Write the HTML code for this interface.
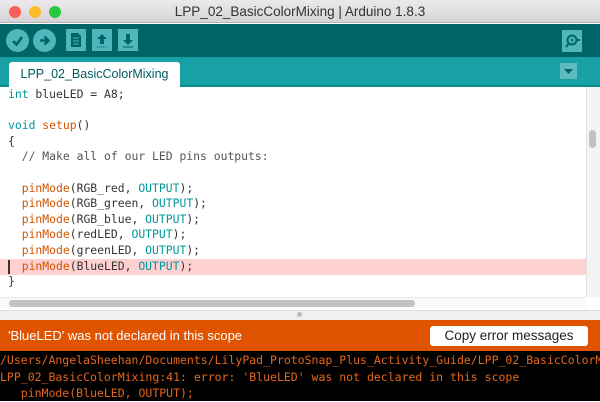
<!DOCTYPE html>
<html><head><style>
*{margin:0;padding:0;box-sizing:border-box}
body{width:600px;height:401px;overflow:hidden;background:#fff;font-family:"Liberation Sans",sans-serif;position:relative}
.a{position:absolute}
.mono{font-family:"DejaVu Sans Mono","Liberation Mono",monospace}
.code div{height:15.6px;line-height:15.6px;white-space:pre;font-size:11.4px;color:#333}
.k{color:#00979c}.f{color:#d35400}
.btn{width:23px;height:23px;border-radius:50%;background:#4db7bb;top:29px}
.sq{width:20px;height:22px;background:#4db7bb;top:29px}
.con div{height:16.5px;line-height:16.5px;white-space:pre;font-size:11.5px;color:#e5661a}
</style></head><body>
<div class="a" style="left:0;top:0;width:600px;height:23px;background:linear-gradient(#ebe9eb,#d6d4d6);border-bottom:1px solid #b5b5b5"></div>
<div class="a" style="left:9px;top:6px;width:12px;height:12px;border-radius:50%;background:#fc5f57"></div>
<div class="a" style="left:29px;top:6px;width:12px;height:12px;border-radius:50%;background:#fdbc2e"></div>
<div class="a" style="left:49px;top:6px;width:12px;height:12px;border-radius:50%;background:#29c840"></div>
<div class="a" style="left:0;top:4px;width:600px;text-align:center;font-size:13.5px;color:#333">LPP_02_BasicColorMixing | Arduino 1.8.3</div>
<div class="a" style="left:0;top:24px;width:600px;height:33px;background:#006468"></div>
<div class="a btn" style="left:6px"><svg width="23" height="23"><path d="M7 12l3.5 3.5L16 8" stroke="#006468" stroke-width="2.6" fill="none"/></svg></div>
<div class="a btn" style="left:33px"><svg width="23" height="23"><path d="M7 11.5h8M11.5 7.5l4 4-4 4" stroke="#006468" stroke-width="2.4" fill="none"/></svg></div>
<div class="a sq" style="left:66px"><svg width="20" height="22"><path d="M5 4h7l3 3v11H5z" fill="#006468"/><path d="M7 9h6M7 12h6M7 15h6" stroke="#4db7bb"/></svg></div>
<div class="a sq" style="left:92px"><svg width="20" height="22"><path d="M10 5l-5 5h3v5h4v-5h3z" fill="#006468"/><path d="M5 18h10" stroke="#006468" stroke-dasharray="1 1"/></svg></div>
<div class="a sq" style="left:118px"><svg width="20" height="22"><path d="M10 16l-5-5h3V5h4v6h3z" fill="#006468"/><path d="M5 18h10" stroke="#006468"/></svg></div>
<div class="a sq" style="left:562px;top:30px"><svg width="20" height="22"><circle cx="10" cy="10" r="4.5" stroke="#006468" stroke-width="2" fill="none"/><circle cx="10" cy="10" r="1.3" fill="#006468"/><path d="M7 13l-3 4M15 10h3" stroke="#006468" stroke-width="2"/></svg></div>
<div class="a" style="left:0;top:57px;width:600px;height:30px;background:#17a1a5;border-bottom:2px solid #0b8c90"></div>
<div class="a" style="left:9px;top:62px;width:171px;height:25px;background:#fff;border-radius:3px 3px 0 0;text-align:center;font-size:12.5px;line-height:24px;color:#005c5f">LPP_02_BasicColorMixing</div>
<div class="a" style="left:560px;top:63px;width:17px;height:16px;background:#5cbcc0"><svg width="17" height="16"><path d="M4 6h9l-4.5 5z" fill="#006468"/></svg></div>
<div class="a" style="left:0;top:259px;width:586px;height:16px;background:#ffd0d0"></div>
<div class="a" style="left:8px;top:260px;width:2px;height:14px;background:#333"></div>
<div class="a mono code" style="left:8px;top:87px">
<div><span class="k">int</span> blueLED = A8;</div>
<div> </div>
<div><span class="k">void</span> <span class="f">setup</span>()</div>
<div>{</div>
<div>  <span style="color:#555">// Make all of our LED pins outputs:</span></div>
<div> </div>
<div>  <span class="f">pinMode</span>(RGB_red, <span class="k">OUTPUT</span>);</div>
<div>  <span class="f">pinMode</span>(RGB_green, <span class="k">OUTPUT</span>);</div>
<div>  <span class="f">pinMode</span>(RGB_blue, <span class="k">OUTPUT</span>);</div>
<div>  <span class="f">pinMode</span>(redLED, <span class="k">OUTPUT</span>);</div>
<div>  <span class="f">pinMode</span>(greenLED, <span class="k">OUTPUT</span>);</div>
<div>  <span class="f">pinMode</span>(BlueLED, <span class="k">OUTPUT</span>);</div>
<div>}</div>
</div>
<div class="a" style="left:586px;top:87px;width:14px;height:210px;background:#f4f4f4;border-left:1px solid #e0e0e0"></div>
<div class="a" style="left:589px;top:130px;width:7px;height:18px;border-radius:4px;background:#c2c2c2"></div>
<div class="a" style="left:0;top:297px;width:586px;height:12px;background:#fafafa;border-top:1px solid #e8e8e8"></div>
<div class="a" style="left:9px;top:300px;width:406px;height:7px;border-radius:4px;background:#c2c2c2"></div>
<div class="a" style="left:0;top:310px;width:600px;height:10px;background:#f0f0f0;border-top:1px solid #ddd"></div>
<div class="a" style="left:297px;top:312px;width:5px;height:5px;border-radius:50%;background:#bbb"></div>
<div class="a" style="left:0;top:320px;width:600px;height:31px;background:#e05400"></div>
<div class="a" style="left:8px;top:328px;font-size:13px;color:#fff">'BlueLED' was not declared in this scope</div>
<div class="a" style="left:430px;top:326px;width:158px;height:20px;background:#fff;border-radius:3px;text-align:center;font-size:13.5px;line-height:20px;color:#222">Copy error messages</div>
<div class="a" style="left:0;top:351px;width:600px;height:50px;background:#000"></div>
<div class="a mono con" style="left:0;top:352px;width:600px;overflow:hidden">
<div>/Users/AngelaSheehan/Documents/LilyPad_ProtoSnap_Plus_Activity_Guide/LPP_02_BasicColorMixing</div>
<div>LPP_02_BasicColorMixing:41: error: 'BlueLED' was not declared in this scope</div>
<div>   pinMode(BlueLED, OUTPUT);</div>
</div>
</body></html>
